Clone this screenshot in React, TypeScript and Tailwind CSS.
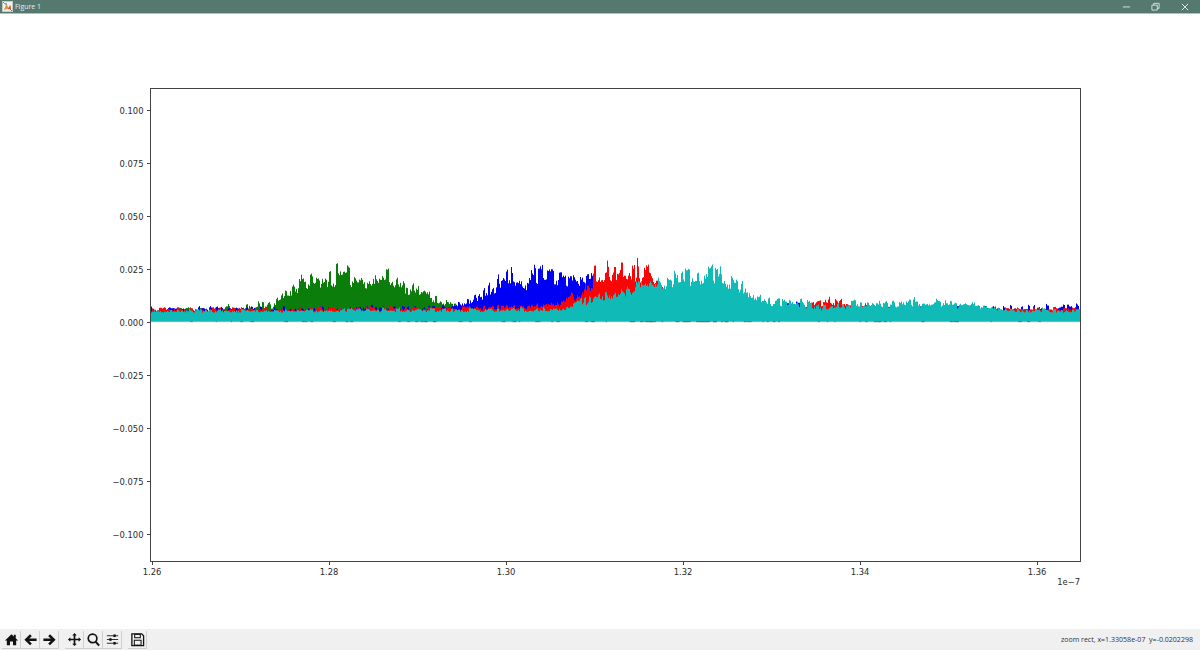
import React from "react";

type Pt = [number, number, number];

function rng(seed: number) {
  let a = seed;
  return () => {
    a |= 0;
    a = (a + 0x6d2b79f5) | 0;
    let t = Math.imul(a ^ (a >>> 15), 1 | a);
    t = (t + Math.imul(t ^ (t >>> 7), 61 | t)) ^ t;
    return ((t ^ (t >>> 14)) >>> 0) / 4294967296;
  };
}

const ZERO = 322;

function series(env: Pt[], seed: number, x0: number, x1: number) {
  const r = rng(seed);
  const clumps: number[] = [];
  for (let i = 0; i < 800; i++) clumps.push(r());
  let d = "";
  for (let px = x0; px <= x1; px += 1) {
    const x = px + 0.5;
    let k = 0;
    while (k < env.length - 2 && env[k + 1][0] < x) k++;
    const a = env[k];
    const b = env[k + 1];
    const t = Math.max(0, Math.min(1, (x - a[0]) / (b[0] - a[0])));
    const body = a[1] + (b[1] - a[1]) * t;
    const peak = a[2] + (b[2] - a[2]) * t;
    const c = clumps[Math.floor(x / 2.3) % 800];
    const spike = Math.pow(c, 1.7) * (0.6 + 0.4 * r());
    const h = ZERO - body;
    const jitter = Math.min(7, Math.max(0, h - 12) * 0.25 + 2);
    const y = body + (peak - body) * spike + r() * jitter * (1 - spike);
    d += `M${x.toFixed(1)} ${ZERO}V${y.toFixed(1)}`;
  }
  return d;
}

const greenEnv: Pt[] = [
  [150, 311, 308], [200, 311, 305], [255, 310, 302], [272, 306, 295], [282, 298, 285],
  [293, 289, 275], [310, 286, 270], [340, 280, 262], [365, 282, 266], [383, 281, 263],
  [400, 285, 271], [420, 293, 283], [440, 301, 294], [455, 305, 301], [462, 310, 308], [1080, 322, 322],
];
const blueEnv: Pt[] = [
  [150, 310, 306], [440, 309, 304], [462, 305, 299], [473, 300, 294], [490, 290, 280],
  [510, 281, 261], [530, 284, 262], [552, 281, 256], [575, 280, 262], [585, 285, 264],
  [595, 292, 271], [610, 305, 300], [780, 310, 307], [790, 305, 299], [800, 303, 296],
  [806, 310, 307], [980, 310, 305], [1080, 309, 303],
];
const redEnv: Pt[] = [
  [150, 310, 306], [480, 309, 305], [540, 305, 302], [560, 303, 298], [570, 298, 290],
  [580, 296, 284], [590, 285, 269], [600, 279, 256], [620, 274, 255], [628, 276, 252],
  [650, 278, 254], [655, 283, 277], [665, 290, 285], [672, 305, 303], [800, 309, 307],
  [815, 304, 300], [818, 303, 297], [835, 303, 296], [845, 304, 298], [852, 306, 302],
  [880, 307, 301], [900, 309, 306], [1080, 310, 306],
];
const cyanEnv: Pt[] = [
  [150, 311, 309], [560, 310, 306], [573, 305, 299], [600, 298, 291], [630, 291, 282],
  [640, 282, 275], [655, 286, 278], [670, 285, 272], [680, 281, 265], [700, 279, 262],
  [718, 279, 257], [730, 285, 267], [745, 292, 280], [755, 296, 284], [765, 301, 295],
  [775, 304, 298], [800, 305, 296], [825, 309, 303], [850, 306, 299], [900, 305, 296],
  [935, 304, 294], [950, 305, 299], [985, 307, 302], [1000, 310, 306], [1040, 311, 307], [1080, 311, 308],
];

const paths = {
  g: series(greenEnv, 11, 151, 470),
  b: series(blueEnv, 23, 151, 1079),
  r: series(redEnv, 37, 151, 1079),
  c: series(cyanEnv, 53, 151, 1079),
};

function zeroDashes(color: string, seed: number, from: number, to: number, n: number) {
  const r = rng(seed);
  let d = "";
  for (let i = 0; i < n; i++) {
    const x = from + r() * (to - from);
    d += `M${x.toFixed(1)} 321.6H${(x + 1 + r() * 3).toFixed(1)}`;
  }
  return <path d={d} stroke={color} strokeWidth={1} fill="none" />;
}

const yTicks: [number, string][] = [
  [110, "0.100"], [163, "0.075"], [216, "0.050"], [269, "0.025"], [322, "0.000"],
  [375, "\u22120.025"], [428, "\u22120.050"], [481, "\u22120.075"], [534, "\u22120.100"],
];
const xTicks: [number, string][] = [
  [152, "1.26"], [329, "1.28"], [506, "1.30"], [683, "1.32"], [860, "1.34"], [1037, "1.36"],
];

function Chart() {
  return (
    <svg viewBox="0 14 1200 615" className="block w-full h-full">
      <g fill="none" strokeWidth={1}>
        <path d={paths.g} stroke="#0a7d0a" />
        <path d={paths.b} stroke="#0000f5" />
        <path d={paths.r} stroke="#fa0505" />
        <path d={paths.c} stroke="#0fbab7" />
        <path d="M151 321.7H1080" stroke="#9fb4b4" />
        {zeroDashes("#5a6a9a", 71, 151, 1080, 70)}
        {zeroDashes("#d24040", 83, 620, 770, 30)}
        <rect x={150.5} y={88.5} width={930} height={473} stroke="#444444" />
        {yTicks.map(([y]) => (
          <path key={y} d={`M147 ${y + 0.5}H150.5`} stroke="#444444" />
        ))}
        {xTicks.map(([x]) => (
          <path key={x} d={`M${x + 0.5} 561.5V565`} stroke="#444444" />
        ))}
      </g>
      <g fill="#2a2a2a" fontFamily="'DejaVu Sans', sans-serif" fontSize={8.4}>
        {yTicks.map(([y, t]) => (
          <text key={y} x={143.5} y={y + 3.7} textAnchor="end">{t}</text>
        ))}
        {xTicks.map(([x, t]) => (
          <text key={x} x={x} y={574.5} textAnchor="middle">{t}</text>
        ))}
        <text x={1080} y={585} textAnchor="end">1e{"\u2212"}7</text>
      </g>
    </svg>
  );
}

function Tool({ children, sep }: { children: React.ReactNode; sep?: boolean }) {
  return (
    <div className={`flex h-[18px] w-[19px] items-center justify-center border-b border-r border-[#cfcfcf] ${sep ? "mr-[6px]" : ""}`}>
      <svg viewBox="0 0 16 16" className="w-[15px] h-[15px]">{children}</svg>
    </div>
  );
}

export default function App() {
  return (
    <div className="flex h-[650px] w-[1200px] flex-col overflow-hidden bg-white font-['Open_Sans',sans-serif]">
      <div className="flex h-[14px] shrink-0 items-center border-b border-[#a9c4bc] bg-[#56796f] pl-[2px]">
        <svg viewBox="0 0 12 12" className="h-[11px] w-[11px] shrink-0">
          <rect x="0.5" y="0.5" width="11" height="11" fill="#f3f1ea" stroke="#c9c9c9" />
          <path d="M2 10 L5 3 L7 8 Z" fill="#d9962f" />
          <path d="M6 9 L10 9 L9 4 Z" fill="#c4563a" />
          <path d="M3 3 L5 2 L5 5 Z" fill="#5b8a5a" />
          <path d="M1 1 L3 3 M11 11 L9 9" stroke="#555" strokeWidth="0.8" />
        </svg>
        <span className="ml-[2px] text-[7px] leading-none text-[#e6eeeb]">Figure 1</span>
        <div className="ml-auto flex items-center text-[#dfe8e5]">
          <svg viewBox="0 0 10 10" className="mr-[20px] h-[9px] w-[9px]">
            <path d="M1 5.5H9" stroke="currentColor" strokeWidth="1" />
          </svg>
          <svg viewBox="0 0 10 10" className="mr-[21px] h-[9px] w-[9px]">
            <path d="M1 3.5H7V9H1ZM3 3.5V1.5H9V7H7" stroke="currentColor" strokeWidth="1" fill="none" />
          </svg>
          <svg viewBox="0 0 10 10" className="mr-[11px] h-[8px] w-[8px]">
            <path d="M1 1L9 9M9 1L1 9" stroke="currentColor" strokeWidth="1.2" />
          </svg>
        </div>
      </div>
      <div className="min-h-0 flex-1">
        <Chart />
      </div>
      <div className="flex h-[21px] shrink-0 items-center bg-[#f0f0f0] pl-[2px] pr-[7px]">
        <Tool>
          <path d="M8 2.5 L10.5 4.8 L10.5 3 L12.5 3 L12.5 6.6 L15 9 L13 9 L13 14 L9.6 14 L9.6 10 L6.4 10 L6.4 14 L3 14 L3 9 L1 9 Z" fill="#111" />
        </Tool>
        <Tool>
          <path d="M7.5 2.5 L9.4 4.4 L6.6 7 L14.5 7 L14.5 9.6 L6.6 9.6 L9.4 12.2 L7.5 14 L1.5 8.3 Z" fill="#111" />
        </Tool>
        <Tool sep>
          <path d="M8.5 2.5 L6.6 4.4 L9.4 7 L1.5 7 L1.5 9.6 L9.4 9.6 L6.6 12.2 L8.5 14 L14.5 8.3 Z" fill="#111" />
        </Tool>
        <Tool>
          <path d="M8 1 L10.4 3.6 L8.9 3.6 L8.9 7.1 L12.4 7.1 L12.4 5.6 L15 8 L12.4 10.4 L12.4 8.9 L8.9 8.9 L8.9 12.4 L10.4 12.4 L8 15 L5.6 12.4 L7.1 12.4 L7.1 8.9 L3.6 8.9 L3.6 10.4 L1 8 L3.6 5.6 L3.6 7.1 L7.1 7.1 L7.1 3.6 L5.6 3.6 Z" fill="#111" />
        </Tool>
        <Tool>
          <circle cx="7" cy="6.8" r="4.6" fill="none" stroke="#111" strokeWidth="1.8" />
          <path d="M10.2 10.2 L14 14.5" stroke="#111" strokeWidth="2.2" />
        </Tool>
        <Tool sep>
          <path d="M2 4H14M2 8H14M2 12H14" stroke="#333" strokeWidth="1.1" />
          <rect x="9" y="2.6" width="2.4" height="2.8" fill="#111" />
          <rect x="4.6" y="6.6" width="2.4" height="2.8" fill="#111" />
          <rect x="9" y="10.6" width="2.4" height="2.8" fill="#111" />
        </Tool>
        <Tool>
          <path d="M2 2H12.5L14.5 4V14.5H2Z" fill="none" stroke="#111" strokeWidth="1.4" />
          <rect x="5" y="2.5" width="6" height="3.6" fill="none" stroke="#111" strokeWidth="1.1" />
          <rect x="4.6" y="8.8" width="7.2" height="5.2" fill="none" stroke="#111" strokeWidth="1.1" />
        </Tool>
        <span className="ml-auto whitespace-pre text-[7.05px] leading-none text-[#333333]">zoom rect, x=1.33058e-07  y=-0.0202298</span>
      </div>
    </div>
  );
}
